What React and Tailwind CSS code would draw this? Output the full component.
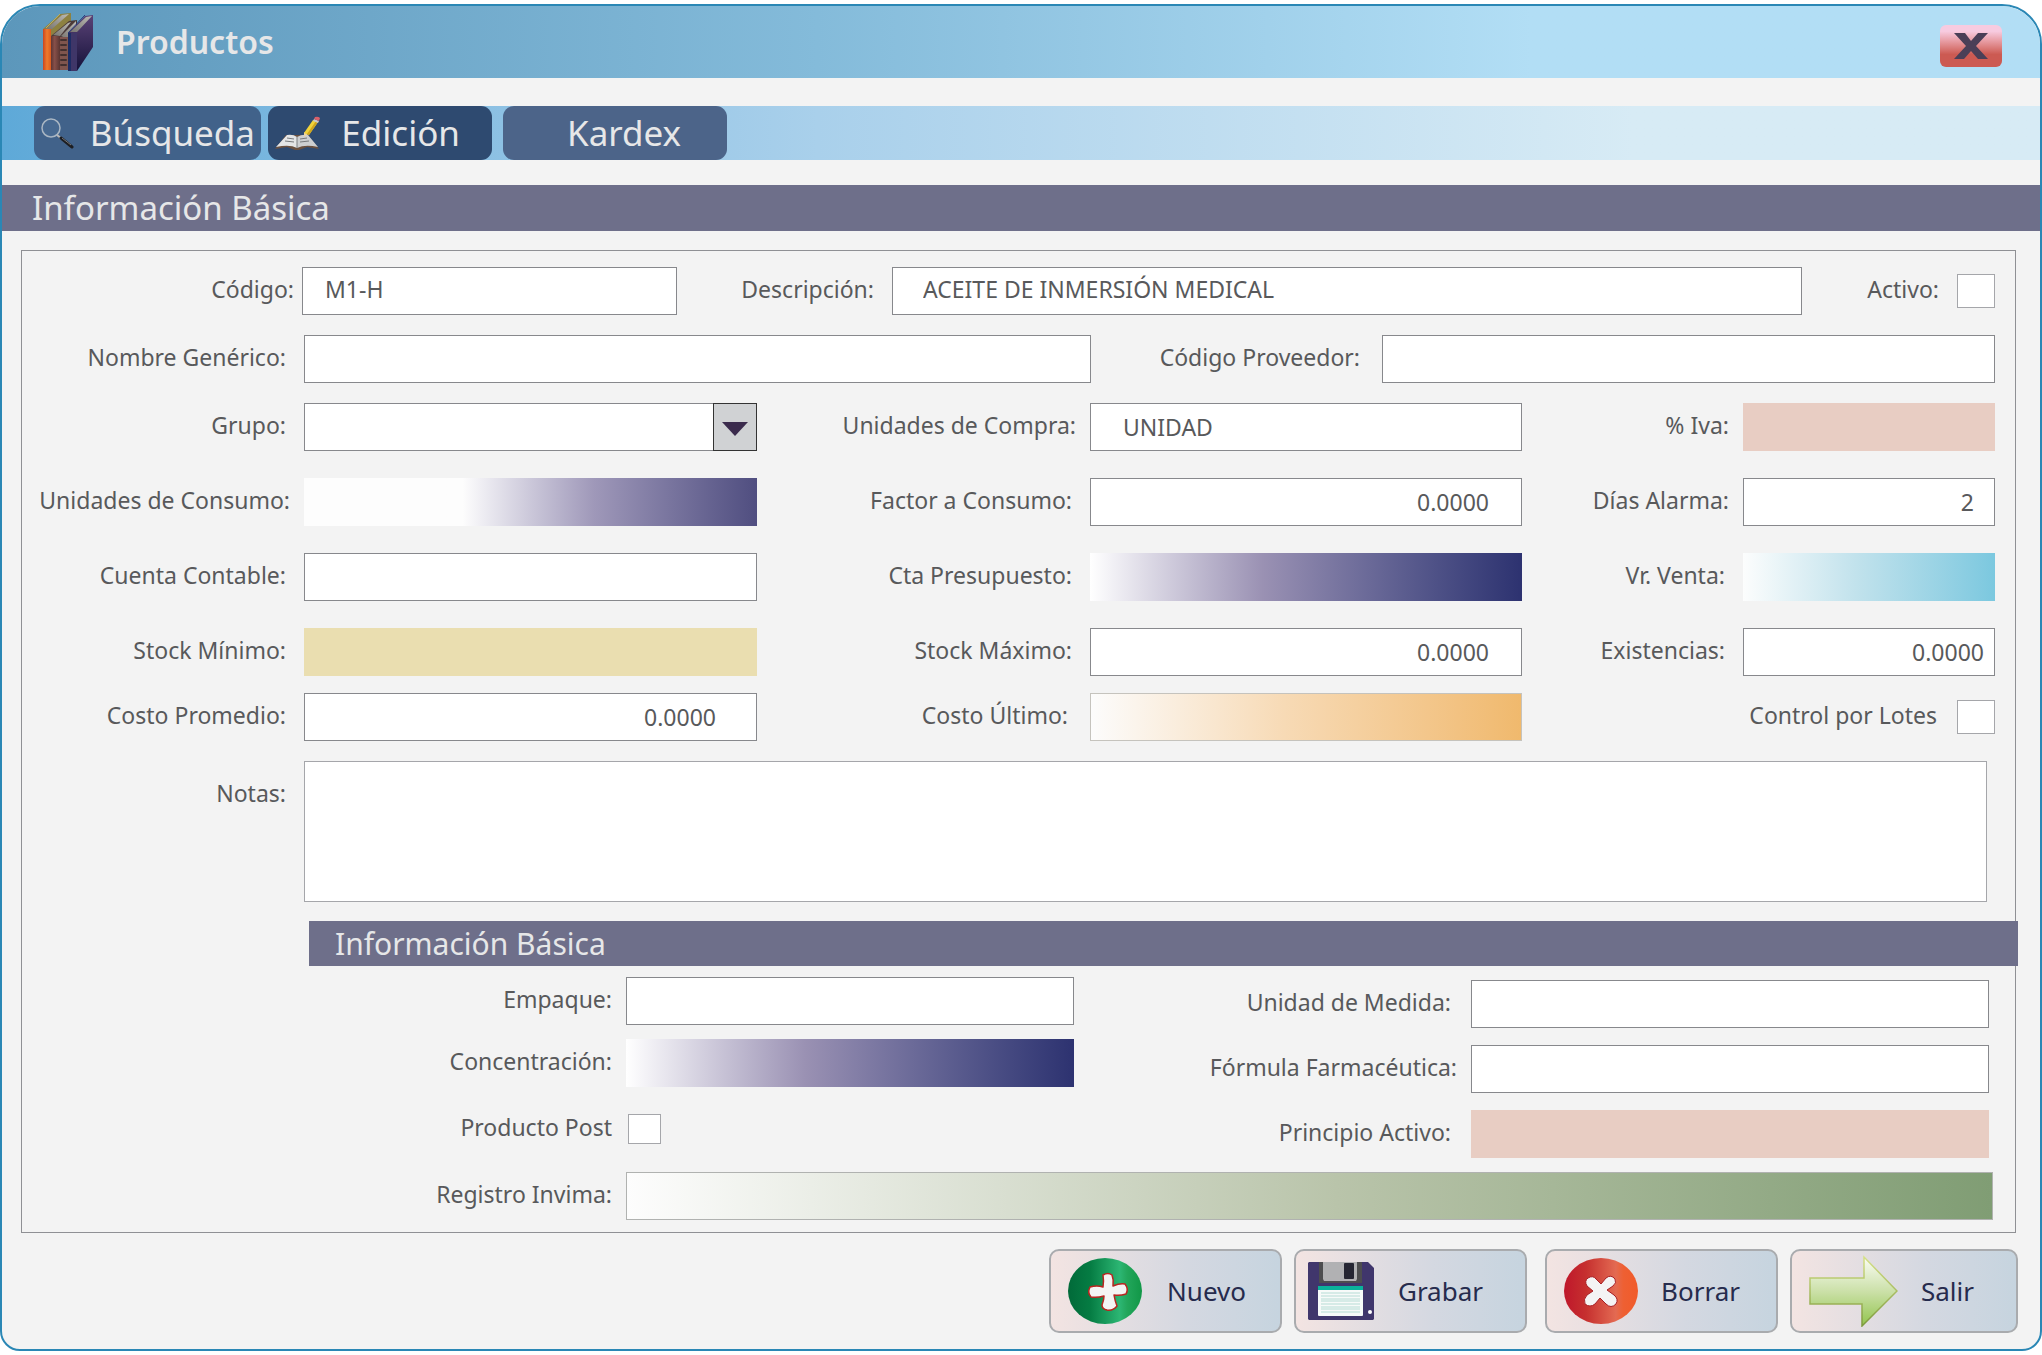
const ink = "text-[#58595b]";
const box = "min-w-0 h-12 text-[23px] text-[#58595b] outline-none";

const plain = "border border-[#87888c] bg-white";
const violetFill = "bg-linear-to-r from-white via-[#9a91b3] via-40% to-[#2d3270]";
const pinkFill = "bg-[#e8cdc3]";

const Label = ({ htmlFor, children, className = "" }) => (
  <label
    htmlFor={htmlFor}
    className={`pb-1 text-right text-[23px] leading-8 whitespace-nowrap ${ink} ${className}`}
  >
    {children}
  </label>
);

const Field = ({ id, value = "", fill = plain, className = "" }) => (
  <input id={id} type="text" defaultValue={value} className={`w-full ${box} ${fill} ${className}`} />
);

const Check = ({ id, size = "w-[38px] h-[34px]" }) => (
  <input
    id={id}
    type="checkbox"
    className={`shrink-0 appearance-none border border-[#a5a6aa] bg-white checked:bg-[#6e6f8a] ${size}`}
  />
);

const BooksIcon = () => (
  <svg viewBox="0 0 52 60" className="w-[52px] h-[60px]">
    <defs>
      <linearGradient id="bookOrange">
        <stop offset="0" stopColor="#c9451f" />
        <stop offset="0.5" stopColor="#f07a2c" />
        <stop offset="1" stopColor="#d95a1e" />
      </linearGradient>
      <linearGradient id="bookBrown">
        <stop offset="0" stopColor="#5d3634" />
        <stop offset="0.4" stopColor="#875049" />
        <stop offset="1" stopColor="#593532" />
      </linearGradient>
      <linearGradient id="bookPages" x1="0" y1="1" x2="1" y2="0">
        <stop offset="0" stopColor="#77746f" />
        <stop offset="1" stopColor="#bdbbb6" />
      </linearGradient>
      <linearGradient id="bookCover" x2="0" y2="1">
        <stop offset="0" stopColor="#5a4276" />
        <stop offset="1" stopColor="#15123a" />
      </linearGradient>
    </defs>
    <path d="M1 17 18 2l11-1v14L9 34z" fill="#8d8141" />
    <path d="M4 17 20 3l7-1L10 17z" fill="url(#bookPages)" />
    <path d="M18 2 4 16" stroke="#b9ad62" strokeWidth="1" />
    <path d="M1 17h8v41H1z" fill="url(#bookOrange)" />
    <path d="M9 24 27 9l8-1v20L18 40z" fill="#4b3a38" />
    <path d="M11 23 26 11l3-1-11 14z" fill="url(#bookPages)" />
    <path d="M9 24h9v34H9z" fill="url(#bookBrown)" />
    <path d="M19 24 34 9v9l-8 9z" fill="url(#bookPages)" />
    <path d="M18 25h8v33h-8z" fill="#80554e" />
    <path
      d="M19 28h5M19 33h5M19 38h5M19 43h5M19 48h5M19 53h5"
      stroke="#44302f"
      strokeWidth="2"
      strokeLinecap="round"
    />
    <path d="M26 21 43 4l8-1v32L35 59z" fill="url(#bookCover)" />
    <path d="M28 20 44 5l6-1-15 16z" fill="url(#bookPages)" />
    <path d="M26 21 43 3" stroke="#263f7d" strokeWidth="1" />
    <path d="M26 21h9v38h-9z" fill="#3f3668" />
    <path d="M26 21h3v38h-3z" fill="#1d2c64" />
  </svg>
);

const SearchIcon = () => (
  <svg viewBox="0 0 34 32" className="w-[34px] h-8 shrink-0">
    <circle cx="11" cy="11" r="9" fill="#5f87ad" fillOpacity="0.2" stroke="#a9b6c3" strokeWidth="1.5" />
    <path d="M17 18l5 4" stroke="#b9b9b9" strokeWidth="2" />
    <path d="M21 21l11 9" stroke="#1d1e22" strokeWidth="3" strokeLinecap="round" />
    <path d="M22 21l9 7" stroke="#777" strokeWidth="1" />
  </svg>
);

const EditIcon = () => (
  <svg viewBox="0 0 46 34" className="w-[46px] h-[34px] shrink-0">
    <path d="M1 33 12 19h22l11 14-12-2-8 3h-4l-8-3z" fill="#6b5140" />
    <path d="M2 31 13 19q6-1 10 2v11q-7-4-21-1z" fill="#e4e5e6" />
    <path d="M44 31 34 19q-6-1-11 2v11q8-4 21-1z" fill="#cdcfd1" />
    <path d="M23 21v11" stroke="#7d7e80" strokeWidth="1" />
    <path d="M13 22l7 1M11 25l9 1M26 23l7-1M26 26l9-1" stroke="#77797b" strokeWidth="1" />
    <path d="M30 21v-5l4 2z" fill="#f0d4a0" />
    <path d="M30 17 39 4l5 2-9 13z" fill="#f1d33a" />
    <path d="M33 18 42 5l2 1-9 13z" fill="#cfa51f" />
    <path d="M39 5l1-2 5 2-1 2z" fill="#c9c9c9" />
    <path d="M40 3l1-2q3-1 5 1l-1 3z" fill="#d9606a" />
  </svg>
);

const PlusIcon = () => (
  <svg viewBox="0 0 76 66" className="w-[76px] h-[66px]">
    <defs>
      <linearGradient id="green">
        <stop offset="0" stopColor="#016a39" />
        <stop offset="0.3" stopColor="#057c43" />
        <stop offset="0.7" stopColor="#2cb673" />
        <stop offset="0.8" stopColor="#22a65b" />
        <stop offset="1" stopColor="#119747" />
      </linearGradient>
    </defs>
    <ellipse cx="38" cy="33" rx="37" ry="33" fill="url(#green)" />
    <path
      d="M36 17q5-3 9 0 2 5 1 11 7-3 12-2 4 5 1 10-6 2-12 1 1 6 3 11-4 5-10 4-5-1-5-5 2-5 2-9-7 2-13 1-4-4-1-10 7-2 13 0 1-6 0-12z"
      fill="#f4f4f4"
      stroke="#b8251f"
      strokeWidth="1.5"
      strokeLinejoin="round"
    />
  </svg>
);

const FloppyIcon = () => (
  <svg viewBox="0 0 66 58" className="w-[66px] h-[58px]">
    <path d="M1 0h59l6 6v51l-1 1H1l-1-1V1z" fill="#40366c" />
    <path d="M11 0h43v21H11z" fill="#4d4d4f" />
    <path d="M15 0h34v17l-1 2H16l-1-2z" fill="#b1b1b3" />
    <rect x="36" y="1" width="10" height="16" rx="1" fill="#262633" />
    <rect x="10" y="24" width="45" height="30" rx="1" fill="#f7faf9" />
    <path d="M10 24h45v4H10z" fill="#0ab29b" />
    <path
      d="M13 31h39M13 34h39M13 37h39M13 39h39M13 42h39M13 45h39M13 47h39M13 50h39"
      stroke="#b5dcd5"
      strokeWidth="1"
    />
    <circle cx="62" cy="50" r="2" fill="#fff" />
  </svg>
);

const CrossIcon = () => (
  <svg viewBox="0 0 76 66" className="w-[76px] h-[66px]">
    <defs>
      <linearGradient id="red">
        <stop offset="0" stopColor="#bf172b" />
        <stop offset="0.3" stopColor="#c6302f" />
        <stop offset="0.7" stopColor="#e36a52" />
        <stop offset="0.8" stopColor="#ee6033" />
        <stop offset="1" stopColor="#f15a29" />
      </linearGradient>
    </defs>
    <ellipse cx="38" cy="33" rx="37" ry="33" fill="url(#red)" />
    <path
      d="M25 20q5-3 8 1l5 5 5-6q5-4 9 1 2 4-2 7l-6 4 7 5q5 4 2 9-5 5-10 0l-6-6-5 6q-5 4-10 0-2-5 2-9l6-4-6-5q-3-5 1-8z"
      fill="#f4f4f4"
      stroke="#a81f24"
      strokeWidth="1"
    />
  </svg>
);

const ArrowIcon = () => (
  <svg viewBox="0 0 90 72" className="w-[90px] h-[72px]">
    <defs>
      <linearGradient id="lime" x2="0" y2="1">
        <stop offset="0" stopColor="#fbfdf5" />
        <stop offset="0.5" stopColor="#cbe0a8" />
        <stop offset="1" stopColor="#92c54d" />
      </linearGradient>
      <linearGradient id="limeEdge" x2="0" y2="1">
        <stop offset="0" stopColor="#d5e087" />
        <stop offset="1" stopColor="#7d9a3d" />
      </linearGradient>
    </defs>
    <path d="M2 23h54V2l33 34-35 35V49H2z" fill="url(#lime)" stroke="url(#limeEdge)" strokeWidth="1.5" />
  </svg>
);

const tabs = [
  { name: "Búsqueda", icon: <SearchIcon />, style: "w-[227px] mr-[7px] bg-[#41628a] pl-1.5 pr-1.5" },
  { name: "Edición", icon: <EditIcon />, style: "w-[224px] mr-[11px] bg-[#2e4a70] pl-1.5 pr-8" },
  { name: "Kardex", icon: null, style: "w-[224px] bg-[#4c6489] pl-16 pr-12" },
];

const actions = [
  { name: "Nuevo", icon: <PlusIcon />, style: "w-[233px] pl-4 pr-[34px]" },
  { name: "Grabar", icon: <FloppyIcon />, style: "w-[233px] pl-3 pr-[42px]" },
  { name: "Borrar", icon: <CrossIcon />, style: "w-[233px] pl-4 pr-9 ml-1.5" },
  { name: "Salir", icon: <ArrowIcon />, style: "w-[228px] pl-4 pr-[42px]" },
];

const App = () => {
  return (
    <div className="min-h-screen bg-white pt-1 font-['Noto_Sans',sans-serif]">
      <main className="overflow-hidden rounded-t-[40px] rounded-b-[20px] border-2 border-[#2a87b5] bg-[#f3f3f3] pb-4">
        {/* Title bar */}
        <header className="flex h-[72px] items-center justify-between bg-linear-to-r from-[#5c97bb] via-[#84bbda] via-40% to-[#b2def5] to-75% pl-10 pr-[38px]">
          <div className="flex items-center gap-[22px]">
            <BooksIcon />
            <h1 className="text-[32px] font-semibold leading-10 text-[#e6e7e8]">Productos</h1>
          </div>
          <button
            type="button"
            aria-label="Cerrar"
            className="mt-2 flex h-[42px] w-[62px] items-center justify-center rounded-md bg-linear-to-b from-[#f7cbe0] from-15% to-[#cc5a52] to-70%"
          >
            <svg viewBox="0 0 34 26" className="h-[26px] w-[34px]">
              <path d="M0 0h11l6 8 7-8h10L22 13l12 13H24l-7-8-7 8H0l12-13z" fill="#4a3f57" />
            </svg>
          </button>
        </header>

        {/* Tabs */}
        <nav className="mt-7 flex h-[54px] bg-linear-to-r from-[#5ea9d8] via-[#a9d0eb] via-40% to-[#d7ebf5] to-80% pl-8">
          {tabs.map((tab) => (
            <button
              key={tab.name}
              type="button"
              className={`flex h-full items-center justify-between rounded-[11px] text-[35px] leading-10 text-[#e6e7e8] ${tab.style}`}
            >
              {tab.icon}
              <span>{tab.name}</span>
            </button>
          ))}
        </nav>

        <h2 className="mt-[25px] h-[46px] bg-[#6e6f8a] pl-[30px] text-[33px] leading-[46px] text-[#e6e7e8]">
          Información Básica
        </h2>

        <form>
          <section className="mt-[19px] mr-6 ml-[19px] border border-[#8f9094] pt-4 pb-3">
            <div className="pr-5">
              <div className="grid grid-cols-[280px_375fr_215px_910fr_155px_38px] items-center">
                <Label htmlFor="codigo" className="pr-2">Código:</Label>
                <Field id="codigo" value="M1-H" className="pb-1 pl-[22px]" />
                <Label htmlFor="descripcion" className="pr-[18px]">Descripción:</Label>
                <Field id="descripcion" value="ACEITE DE INMERSIÓN MEDICAL" className="pb-1 pl-[30px]" />
                <Label htmlFor="activo" className="pr-[18px]">Activo:</Label>
                <Check id="activo" />
              </div>

              <div className="mt-5 grid grid-cols-[282px_787fr_291px_613fr] items-center">
                <Label htmlFor="generico" className="pr-[18px]">Nombre Genérico:</Label>
                <Field id="generico" />
                <Label htmlFor="proveedor" className="pr-[22px]">Código Proveedor:</Label>
                <Field id="proveedor" />
              </div>

              <div className="mt-5 grid grid-cols-[282px_453fr_333px_432fr_221px_252fr] items-center gap-y-[27px]">
                <Label htmlFor="grupo" className="pr-[18px]">Grupo:</Label>
                <div className="relative">
                  <select id="grupo" className={`w-full appearance-none pl-[22px] ${box} ${plain}`}>
                    <option></option>
                  </select>
                  <span className="pointer-events-none absolute inset-y-0 right-0 flex w-11 items-center justify-center border border-[#333] bg-[#d0d2d4]">
                    <svg viewBox="0 0 26 14" className="mt-1 h-[14px] w-[26px]">
                      <path d="M0 0h26L13 14z" fill="#3b2b4d" />
                    </svg>
                  </span>
                </div>
                <Label htmlFor="compra" className="pr-[14px]">Unidades de Compra:</Label>
                <Field id="compra" value="UNIDAD" className="pl-8" />
                <Label htmlFor="iva" className="pr-[14px]">% Iva:</Label>
                <Field id="iva" fill={pinkFill} />

                <Label htmlFor="consumo" className="pr-[14px]">Unidades de Consumo:</Label>
                <Field
                  id="consumo"
                  fill="bg-linear-to-r from-[#fdfdfd] from-35% via-[#9f98b9] via-64% to-[#504e80]"
                />
                <Label htmlFor="factor" className="pr-[18px]">Factor a Consumo:</Label>
                <Field id="factor" value="0.0000" className="pr-8 text-right" />
                <Label htmlFor="alarma" className="pr-[14px]">Días Alarma:</Label>
                <Field id="alarma" value="2" className="pr-5 text-right" />

                <Label htmlFor="cuenta" className="pr-[18px]">Cuenta Contable:</Label>
                <Field id="cuenta" />
                <Label htmlFor="presupuesto" className="pr-[18px]">Cta Presupuesto:</Label>
                <Field id="presupuesto" fill={violetFill} />
                <Label htmlFor="venta" className="pr-[18px]">Vr. Venta:</Label>
                <Field id="venta" fill="bg-linear-to-r from-[#fcfdfd] via-[#c1e2ec] via-45% to-[#7bc8df]" />

                <Label htmlFor="minimo" className="pr-[18px]">Stock Mínimo:</Label>
                <Field id="minimo" fill="bg-[#eadeb0]" />
                <Label htmlFor="maximo" className="pr-[18px]">Stock Máximo:</Label>
                <Field id="maximo" value="0.0000" className="pr-8 text-right" />
                <Label htmlFor="existencias" className="pr-[18px]">Existencias:</Label>
                <Field id="existencias" value="0.0000" className="pr-2.5 text-right" />
              </div>

              <div className="mt-[17px] grid grid-cols-[282px_453fr_333px_432fr_221px_252fr] items-center">
                <Label htmlFor="promedio" className="pr-[18px]">Costo Promedio:</Label>
                <Field id="promedio" value="0.0000" className="pr-10 text-right" />
                <Label htmlFor="ultimo" className="pr-[22px]">Costo Último:</Label>
                <Field
                  id="ultimo"
                  fill="border border-[#c5c3bd] bg-linear-to-r from-[#fcfcfc] via-[#f7dab5] via-45% to-[#f0b96d]"
                />
                <div className="col-span-2 flex items-center justify-end gap-5">
                  <Label htmlFor="lotes">Control por Lotes</Label>
                  <Check id="lotes" />
                </div>
              </div>

              <div className="mt-5 mr-2 grid grid-cols-[282px_1fr]">
                <Label htmlFor="notas" className="pt-4 pr-[18px]">Notas:</Label>
                <textarea
                  id="notas"
                  className="block h-[141px] w-full resize-none border border-[#a5a6aa] bg-white p-3 text-[23px] text-[#58595b] outline-none"
                />
              </div>
            </div>

            <h2 className="mt-[19px] -mr-[3px] ml-[287px] h-[45px] bg-[#6e6f8a] pl-[26px] text-[30px] leading-[45px] text-[#e6e7e8]">
              Información Básica
            </h2>

            <div className="mt-[11px] grid grid-cols-[604px_448fr_397px_518fr] items-start pr-[26px]">
              <div className="col-span-2 grid grid-cols-[604px_1fr] items-center gap-y-[14px]">
                <Label htmlFor="empaque" className="pr-[14px]">Empaque:</Label>
                <Field id="empaque" />
                <Label htmlFor="concentracion" className="pr-[14px]">Concentración:</Label>
                <Field id="concentracion" fill={violetFill} />
                <Label htmlFor="post" className="pr-[14px]">Producto Post</Label>
                <div className="flex h-14 items-center pl-0.5">
                  <Check id="post" size="w-[33px] h-[30px]" />
                </div>
              </div>
              <div className="col-span-2 mt-[3px] grid grid-cols-[397px_1fr] items-center gap-y-[17px]">
                <Label htmlFor="medida" className="pr-5">Unidad de Medida:</Label>
                <Field id="medida" />
                <Label htmlFor="formula" className="pr-[14px]">Fórmula Farmacéutica:</Label>
                <Field id="formula" />
                <Label htmlFor="principio" className="pr-5">Principio Activo:</Label>
                <Field id="principio" fill={pinkFill} />
              </div>
            </div>

            <div className="mt-[14px] grid grid-cols-[604px_1fr] items-center pr-[22px]">
              <Label htmlFor="invima" className="pr-[14px]">Registro Invima:</Label>
              <Field
                id="invima"
                fill="border border-[#b0b2b0] bg-linear-to-r from-[#fdfdfd] via-[#b9c4aa] via-52% to-[#809d74]"
              />
            </div>
          </section>

          {/* Actions */}
          <div className="mt-4 mr-[22px] flex justify-end gap-3">
            {actions.map((action) => (
              <button
                key={action.name}
                type="button"
                className={`flex h-[84px] items-center justify-between rounded-[10px] border-2 border-[#a9abae] bg-linear-to-r from-[#f3e4e2] via-[#d4d8e1] via-60% to-[#c6d4df] text-[26px] text-[#262b4d] ${action.style}`}
              >
                {action.icon}
                <span>{action.name}</span>
              </button>
            ))}
          </div>
        </form>
      </main>
    </div>
  );
};

export default App;
